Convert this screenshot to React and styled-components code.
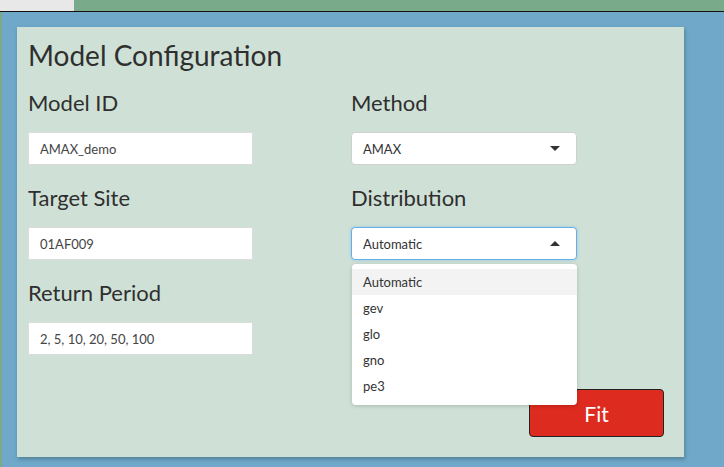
import React from 'react';
import styled, { createGlobalStyle } from 'styled-components';

const GlobalStyle = createGlobalStyle`
  html, body {
    margin: 0;
    padding: 0;
    background: #6fa8c9;
  }
  body {
    font-family: Lato, "Open Sans", "Liberation Sans", sans-serif;
    color: #333;
  }
`;

const Page = styled.div`
  width: 724px;
  height: 467px;
  overflow: hidden;
  background: #6fa8c9;
  display: flex;
  flex-direction: column;
`;

const TopBar = styled.div`
  height: 11px;
  display: flex;
  background: #79ab8b;
  border-bottom: 1px solid #111;
`;

const Tab = styled.div`
  width: 74px;
  background: #e8e8e8;
`;

const Body = styled.div`
  flex: 1;
  display: flex;
  border-left: 2px solid #79ab8b;
  padding: 15px 0 0 15px;
`;

const Panel = styled.div`
  position: relative;
  width: 667px;
  height: 430px;
  box-sizing: border-box;
  background: #cfe1d6;
  box-shadow: 1px 2px 4px rgba(0, 0, 0, 0.25);
  padding: 10px 0 0 11px;
  display: flex;
  flex-direction: column;
`;

const Title = styled.h3`
  margin: 0;
  font-size: 28px;
  font-weight: 400;
  line-height: 36px;
  color: #2f2f2f;
`;

const Grid = styled.div`
  margin-top: 17px;
  display: grid;
  grid-template-columns: 323px 323px;
  grid-auto-rows: 95px;
`;

const Field = styled.div`
  position: relative;
  display: flex;
  flex-direction: column;
`;

const Label = styled.label`
  font-size: 22px;
  line-height: 26px;
  color: #2f2f2f;
  margin-bottom: 16px;
`;

const TextBox = styled.div`
  width: 225px;
  height: 33px;
  box-sizing: border-box;
  background: #fff;
  border: 1px solid #dcdcdc;
  padding: 0 11px;
  display: flex;
  align-items: center;
  font-size: 13px;
  color: #444;
`;

const SelectBox = styled.div`
  width: 226px;
  height: 33px;
  box-sizing: border-box;
  background: #fff;
  border: 1px solid ${p => (p.$focused ? '#66afe9' : '#d0d0d0')};
  border-radius: 4px;
  box-shadow: ${p => (p.$focused ? '0 0 3px rgba(102, 175, 233, 0.6)' : 'none')};
  padding: 0 16px 0 11px;
  display: flex;
  align-items: center;
  justify-content: space-between;
  font-size: 13px;
  color: #333;
`;

const Caret = styled.span`
  width: 0;
  height: 0;
  border-left: 5px solid transparent;
  border-right: 5px solid transparent;
  ${p => (p.$up ? 'border-bottom: 5px solid #333;' : 'border-top: 5px solid #333;')}
`;

const Menu = styled.div`
  position: absolute;
  top: 79px;
  left: 1px;
  width: 225px;
  box-sizing: border-box;
  background: #fff;
  border-radius: 4px;
  box-shadow: 0 1px 4px rgba(0, 0, 0, 0.18);
  padding: 5px 0 6px;
  z-index: 5;
`;

const Option = styled.div`
  height: 26px;
  padding: 0 11px;
  display: flex;
  align-items: center;
  font-size: 13px;
  color: #333;
  background: ${p => (p.$active ? '#f3f3f3' : '#fff')};
`;

const Footer = styled.div`
  flex: 1;
  display: flex;
  justify-content: flex-end;
  align-items: flex-end;
  padding: 0 20px 20px 0;
`;

const FitButton = styled.button`
  width: 135px;
  height: 48px;
  background: #de2b1f;
  border: 1px solid #222;
  border-radius: 4px;
  color: #fff;
  font-family: inherit;
  font-size: 21px;
  cursor: pointer;
`;

const options = ['Automatic', 'gev', 'glo', 'gno', 'pe3'];

export default function App() {
  return (
    <Page>
      <GlobalStyle />
      <TopBar>
        <Tab />
      </TopBar>
      <Body>
        <Panel>
          <Title>Model Configuration</Title>
          <Grid>
            <Field>
              <Label>Model ID</Label>
              <TextBox>AMAX_demo</TextBox>
            </Field>
            <Field>
              <Label>Method</Label>
              <SelectBox>
                AMAX
                <Caret />
              </SelectBox>
            </Field>
            <Field>
              <Label>Target Site</Label>
              <TextBox>01AF009</TextBox>
            </Field>
            <Field>
              <Label>Distribution</Label>
              <SelectBox $focused>
                Automatic
                <Caret $up />
              </SelectBox>
              <Menu>
                {options.map((o, i) => (
                  <Option key={o} $active={i === 0}>{o}</Option>
                ))}
              </Menu>
            </Field>
            <Field>
              <Label>Return Period</Label>
              <TextBox>2, 5, 10, 20, 50, 100</TextBox>
            </Field>
          </Grid>
          <Footer>
            <FitButton>Fit</FitButton>
          </Footer>
        </Panel>
      </Body>
    </Page>
  );
}
